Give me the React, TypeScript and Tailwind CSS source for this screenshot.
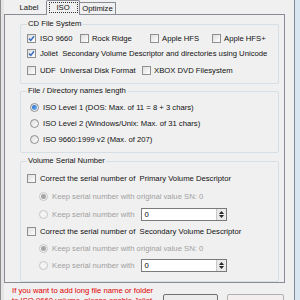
const Check = ({ on }: { on?: boolean }) => (
  <span className="w-[9px] h-[9px] shrink-0 border border-[#8e8f8f] bg-gradient-to-br from-[#dedede] to-white flex items-center justify-center">
    {on && (
      <svg width="7" height="7" viewBox="0 0 7 7">
        <path d="M1 3.6 L2.8 5.4 L6 1.2" stroke="#3c6fbf" strokeWidth="1.5" fill="none" />
      </svg>
    )}
  </span>
)

const Radio = ({ on, off }: { on?: boolean; off?: boolean }) => (
  <span className={`w-[9px] h-[9px] shrink-0 rounded-full border flex items-center justify-center ${off ? 'border-[#c5c5c5] bg-[#f4f4f4]' : 'border-[#8e8f8f] bg-gradient-to-br from-[#dcdcdc] to-white'}`}>
    {on && <span className={`w-[5px] h-[5px] rounded-full ${off ? 'bg-[#a5a5a5]' : 'bg-gradient-to-br from-[#1c63c6] to-[#7bbcf2]'}`} />}
  </span>
)

const Spin = () => (
  <div className="ml-auto w-[10px] h-full border-l border-[#c8c8c8] bg-[#eaeaea] flex flex-col items-center justify-center gap-[1px]">
    <svg width="5" height="3" viewBox="0 0 5 3"><path d="M0 3 L2.5 0 L5 3 Z" fill="#222" /></svg>
    <svg width="5" height="3" viewBox="0 0 5 3"><path d="M0 0 L2.5 3 L5 0 Z" fill="#222" /></svg>
  </div>
)

const Group = ({ title, h, children }: { title: string; h: string; children: React.ReactNode }) => (
  <div className={`w-[259px] ${h} border border-[#d5dfe5] rounded-[2px] flex flex-col`}>
    <div className="-mt-[6px] h-[10px] flex">
      <span className="ml-[6px] px-[1px] bg-[#f0f0f0] leading-[10px]">{title}</span>
    </div>
    {children}
  </div>
)

export default function App() {
  return (
    <div className="w-[300px] h-[300px] overflow-hidden bg-[#f0f0f0] flex text-[7.7px] leading-none text-[#111] font-['Liberation_Sans',Arial,sans-serif]">
      <div className="w-[4px] shrink-0 border-l border-[#8c8c8c] bg-[#e4e4e4]" />
      <div className="w-[290px] shrink-0 flex flex-col">
        <div className="h-[14px] flex items-end pl-[8px]">
          <div className="w-[34px] h-[12px] flex items-center justify-center">Label</div>
          <div className="w-[34px] h-[15px] -mb-[1px] border-l border-r border-t border-[#898c95] bg-[#f0f0f0] rounded-t-[2px] flex items-start justify-center pt-[1px] relative z-10">
            <span className="w-[29px] h-[11px] border border-dotted border-[#333] flex items-center justify-center">ISO</span>
          </div>
          <div className="w-[36px] h-[12px] border-r border-t border-[#898c95] flex items-center justify-center">Optimize</div>
        </div>
        <div className="w-[281px] h-[271px] border border-[#898c95] pl-[15px] pt-[9px] flex flex-col">
          <Group title="CD File System" h="h-[60px]">
            <div className="pl-[6px] flex flex-col">
              <div className="mt-[3px] h-[13px] flex items-center">
                <div className="w-[53px] flex items-center gap-[4px]"><Check on /><span>ISO 9660</span></div>
                <div className="w-[70px] flex items-center gap-[3px]"><Check /><span>Rock Ridge</span></div>
                <div className="w-[62px] flex items-center gap-[3px]"><Check /><span>Apple HFS</span></div>
                <div className="flex items-center gap-[3px]"><Check /><span>Apple HFS+</span></div>
              </div>
              <div className="mt-[2px] h-[13px] flex items-center gap-[4px]">
                <Check on />
                <span className="whitespace-pre">Joliet  Secondary Volume Descriptor and directories using Unicode</span>
              </div>
              <div className="mt-[4px] h-[13px] flex items-center">
                <div className="w-[115px] flex items-center gap-[4px]"><Check /><span className="whitespace-pre">UDF  Universal Disk Format</span></div>
                <div className="flex items-center gap-[3px]"><Check /><span>XBOX DVD Filesystem</span></div>
              </div>
            </div>
          </Group>
          <div className="h-[7px] shrink-0" />
          <Group title="File / Directory names  length" h="h-[62px]">
            <div className="pl-[9px] mt-[5px] flex flex-col gap-[3px]">
              <div className="h-[13px] flex items-center gap-[4px]"><Radio on /><span>ISO Level 1 (DOS: Max. of 11 = 8 + 3 chars)</span></div>
              <div className="h-[13px] flex items-center gap-[4px]"><Radio /><span>ISO Level 2 (Windows/Unix: Max. of 31 chars)</span></div>
              <div className="h-[13px] flex items-center gap-[4px]"><Radio /><span>ISO 9660:1999 v2 (Max. of 207)</span></div>
            </div>
          </Group>
          <div className="h-[8px] shrink-0" />
          <Group title="Volume Serial Number" h="h-[121px]">
            <div className="pl-[6px] flex flex-col">
              <div className="mt-[6px] h-[13px] flex items-center gap-[4px]"><Check /><span className="whitespace-pre">Correct the serial number of  Primary Volume Descriptor</span></div>
              <div className="mt-[5px] h-[13px] pl-[12px] flex items-center gap-[4px] text-[#a0a0a0]"><Radio on off /><span>Keep serial number with original value SN: 0</span></div>
              <div className="mt-[5px] h-[13px] pl-[12px] flex items-center gap-[4px] text-[#a0a0a0]">
                <Radio off /><span>Keep serial number with</span>
                <div className="ml-[3px] w-[86px] h-[13px] border border-[#7a7a7a] bg-white flex items-center pl-[2px] text-black">
                  <span>0</span><Spin />
                </div>
              </div>
              <div className="mt-[4px] h-[13px] flex items-center gap-[4px]"><Check /><span className="whitespace-pre">Correct the serial number of  Secondary Volume Descriptor</span></div>
              <div className="mt-[4px] h-[13px] pl-[12px] flex items-center gap-[4px] text-[#a0a0a0]"><Radio on off /><span>Keep serial number with original value SN: 0</span></div>
              <div className="mt-[4px] h-[13px] pl-[12px] flex items-center gap-[4px] text-[#a0a0a0]">
                <Radio off /><span>Keep serial number with</span>
                <div className="ml-[3px] w-[86px] h-[13px] border border-[#7a7a7a] bg-white flex items-center pl-[2px] text-black">
                  <span>0</span><Spin />
                </div>
              </div>
            </div>
          </Group>
        </div>
        <div className="flex pl-[8px] pt-[3px]">
          <div className="w-[151px] text-[#e00000] leading-[10px]">
            <div>If you want to add long file name or folder</div>
            <div>to ISO 9660 volume, please enable Joliet</div>
          </div>
          <div className="mt-[8px] w-[55px] h-[20px] border border-[#707070] rounded-[2px] bg-[#ececec]" />
          <div className="ml-[9px] mt-[8px] w-[57px] h-[20px] border border-[#b0b0b0] rounded-[2px] bg-[#f4eeee]" />
        </div>
      </div>
      <div className="w-[6px] shrink-0 border-l border-[#7d8a96] bg-[#d8e6f2]" />
    </div>
  )
}
